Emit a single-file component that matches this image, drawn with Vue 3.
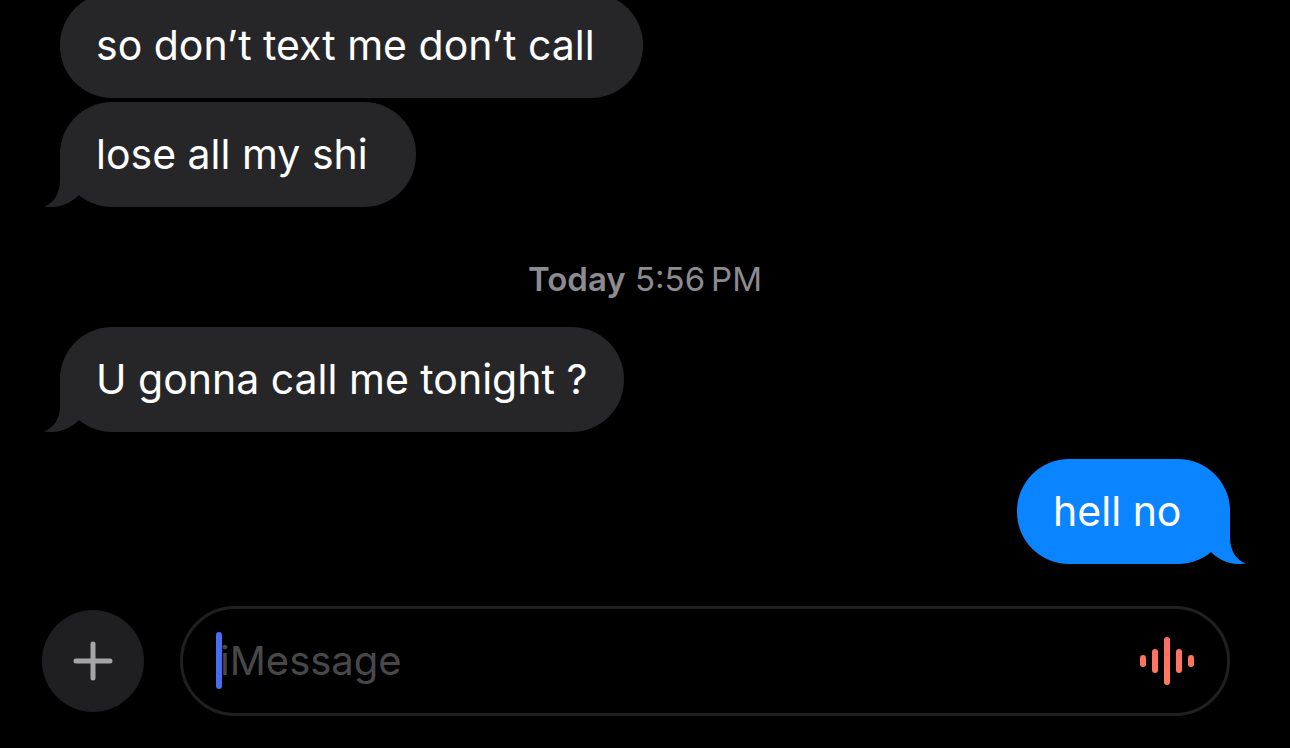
<script setup>
import { ref } from 'vue'

const draft = ref('')
const earlier = [
  { id: 1, text: 'so don’t text me don’t call\u00a0', tail: false },
  { id: 2, text: 'lose all my shi\u00a0', tail: true },
]
const bars = [
  { x: 0, h: 12 },
  { x: 12, h: 24 },
  { x: 24, h: 48 },
  { x: 36, h: 24 },
  { x: 48, h: 12 },
]
</script>

<template>
  <main class="chat">
    <section class="thread">
      <div class="group">
        <p v-for="m in earlier" :key="m.id" class="bubble received">
          {{ m.text }}
          <svg v-if="m.tail" class="tail" viewBox="0 0 52 105" aria-hidden="true">
            <path d="M16 52V78C16 92 10 101 0 104.500C13 106.500 25 103 35 93L52 80V52Z" />
          </svg>
        </p>
      </div>
      <p class="stamp"><strong>Today</strong> <time>5:56&#8201;PM</time></p>
      <p class="bubble received">
        U gonna call me tonight ?
        <svg class="tail" viewBox="0 0 52 105" aria-hidden="true">
          <path d="M16 52V78C16 92 10 101 0 104.500C13 106.500 25 103 35 93L52 80V52Z" />
        </svg>
      </p>
      <p class="bubble sent">
        hell no&nbsp;
        <svg class="tail" viewBox="0 0 52 105" aria-hidden="true">
          <path d="M36 52V78C36 92 42 101 52 104.500C39 106.500 27 103 17 93L0 80V52Z" />
        </svg>
      </p>
    </section>

    <form class="composer" @submit.prevent>
      <button class="add" type="button" aria-label="Add attachment">
        <svg width="40" height="40" viewBox="0 0 40 40" aria-hidden="true">
          <path d="M20 3V37M3 20H37" />
        </svg>
      </button>
      <div class="field">
        <input v-model="draft" type="text" placeholder="iMessage" aria-label="iMessage" />
        <span class="caret"></span>
        <button class="voice" type="button" aria-label="Record audio message">
          <svg width="54" height="48" viewBox="0 0 54 48" aria-hidden="true">
            <defs>
              <linearGradient id="wave" gradientUnits="userSpaceOnUse" x1="0" y1="0" x2="0" y2="48">
                <stop offset="0" stop-color="#ff6b66" />
                <stop offset="1" stop-color="#ff7d5c" />
              </linearGradient>
            </defs>
            <rect
              v-for="b in bars"
              :key="b.x"
              :x="b.x"
              :y="24 - b.h / 2"
              width="6"
              :height="b.h"
              rx="3"
              fill="url(#wave)"
            />
          </svg>
        </button>
      </div>
    </form>
  </main>
</template>

<style>
body {
  background: #000;
}
</style>

<style scoped>
.chat {
  box-sizing: border-box;
  height: 100vh;
  overflow: hidden;
  display: flex;
  flex-direction: column;
  justify-content: flex-end;
  gap: 42px;
  padding: 0 60px 32px 42px;
  background: #000;
  color: #fff;
  font-family: Inter, "Liberation Sans", sans-serif;
  font-size: 40px;
}
.thread {
  display: flex;
  flex-direction: column;
  align-items: flex-start;
  flex-shrink: 0;
  padding-left: 18px;
}
.group {
  display: flex;
  flex-direction: column;
  align-items: flex-start;
  gap: 4px;
}
.bubble {
  position: relative;
  margin: 0;
  padding: 26px 37px 27px 36px;
  border-radius: 52px;
  line-height: 52px;
  font-size: 41px;
}
.received {
  background: #262628;
}
.sent {
  align-self: flex-end;
  margin-top: 27px;
  background: #0b84ff;
}
.tail {
  position: absolute;
  bottom: 0;
  left: -16px;
  width: 52px;
  height: 105px;
}
.sent .tail {
  left: auto;
  right: -16px;
}
.received .tail {
  fill: #262628;
}
.sent .tail {
  fill: #0b84ff;
}
.stamp {
  align-self: center;
  margin: 52px 0 28px;
  line-height: 40px;
  font-size: 33px;
  color: #8c8b91;
}
.stamp strong {
  font-weight: 600;
}
.composer {
  display: flex;
  align-items: center;
  flex-shrink: 0;
  gap: 36px;
}
.add {
  display: flex;
  align-items: center;
  justify-content: center;
  width: 102px;
  height: 102px;
  padding: 0;
  border: 0;
  border-radius: 50%;
  background: #1f1f21;
}
.add path {
  fill: none;
  stroke: #a5a5a8;
  stroke-width: 5;
  stroke-linecap: round;
}
.field {
  position: relative;
  box-sizing: border-box;
  flex: 1;
  display: flex;
  align-items: center;
  height: 110px;
  padding: 0 33px 0 37px;
  border: 3px solid #202021;
  border-radius: 55px;
}
.field input {
  flex: 1;
  min-width: 0;
  padding: 0;
  border: 0;
  outline: 0;
  background: transparent;
  color: #fff;
  font: inherit;
  line-height: 52px;
}
.field input::placeholder {
  color: #48484a;
  opacity: 1;
}
.caret {
  position: absolute;
  left: 33px;
  top: 23px;
  width: 6px;
  height: 57px;
  border-radius: 3px;
  background: #4a6cf0;
}
.voice {
  display: flex;
  padding: 0;
  border: 0;
  background: none;
}
</style>
